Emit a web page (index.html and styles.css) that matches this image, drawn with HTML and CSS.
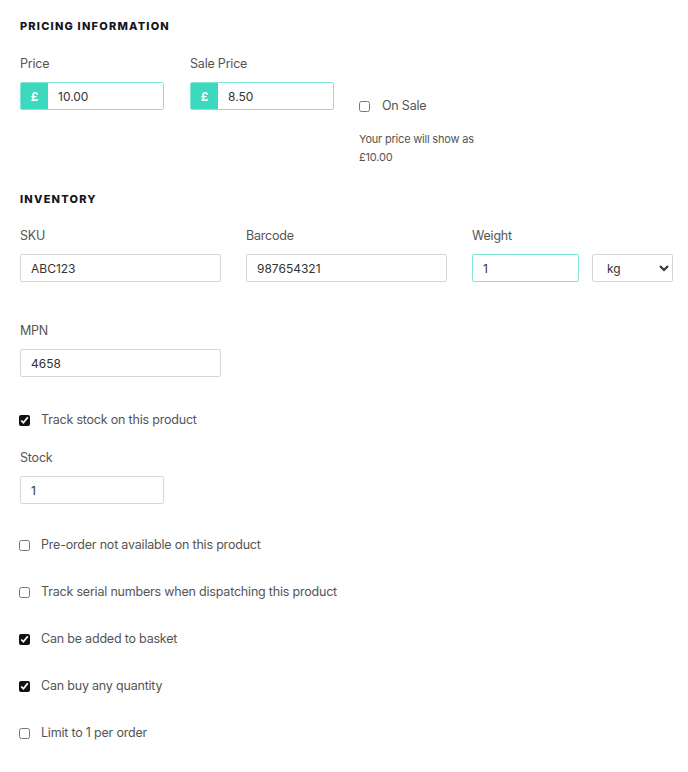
FILE: index.html
```html
<!DOCTYPE html>
<html lang="en">
<head>
    <meta charset="UTF-8">
    <title>Product Pricing &amp; Inventory</title>
    <link rel="stylesheet" href="styles.css">
</head>
<body>
    <div class="panel">
        <h2 class="section-title">Pricing Information</h2>
        <div class="pricing-row">
            <div class="field">
                <label>Price</label>
                <div class="money-input">
                    <span class="currency">£</span>
                    <input type="text" value="10.00">
                </div>
            </div>
            <div class="field">
                <label>Sale Price</label>
                <div class="money-input">
                    <span class="currency">£</span>
                    <input type="text" value="8.50">
                </div>
            </div>
            <div class="sale-box">
                <label class="check"><input type="checkbox"> On Sale</label>
                <p class="hint">Your price will show as<br>£10.00</p>
            </div>
        </div>

        <h2 class="section-title inventory-title">Inventory</h2>
        <div class="inventory-grid">
            <div class="field">
                <label>SKU</label>
                <input type="text" class="text-input" value="ABC123">
            </div>
            <div class="field">
                <label>Barcode</label>
                <input type="text" class="text-input" value="987654321">
            </div>
            <div class="field">
                <label>Weight</label>
                <div class="weight-row">
                    <input type="text" class="text-input active" value="1">
                    <select class="unit-select">
                        <option>kg</option>
                        <option>g</option>
                        <option>lb</option>
                    </select>
                </div>
            </div>
            <div class="field">
                <label>MPN</label>
                <input type="text" class="text-input" value="4658">
            </div>
        </div>

        <label class="check track-stock"><input type="checkbox" checked> Track stock on this product</label>

        <div class="field stock-field">
            <label>Stock</label>
            <input type="text" class="text-input" value="1">
        </div>

        <div class="options">
            <label class="check"><input type="checkbox"> Pre-order not available on this product</label>
            <label class="check"><input type="checkbox"> Track serial numbers when dispatching this product</label>
            <label class="check"><input type="checkbox" checked> Can be added to basket</label>
            <label class="check"><input type="checkbox" checked> Can buy any quantity</label>
            <label class="check"><input type="checkbox"> Limit to 1 per order</label>
        </div>
    </div>
</body>
</html>
```

FILE: styles.css
```css
* {
    margin: 0;
    padding: 0;
    box-sizing: border-box;
    font-family: Inter, "Noto Sans", sans-serif;
}

body {
    background-color: #fff;
    color: #555;
}

.panel {
    padding: 19px 20px 20px 19px;
}

.section-title {
    font-size: 11px;
    font-weight: 800;
    letter-spacing: 1.2px;
    text-transform: uppercase;
    color: #151521;
    line-height: 14px;
    margin-left: 1px;
}

.inventory-title {
    margin-top: 26px;
}

.field {
    margin-left: 1px;
}

.field label {
    display: block;
    font-size: 12.5px;
    color: #555;
    line-height: 16px;
    margin-bottom: 10px;
    letter-spacing: -0.2px;
}

.pricing-row {
    display: flex;
    gap: 25px;
    margin-top: 23px;
}

.pricing-row .field {
    width: 144px;
}

.money-input {
    display: flex;
    height: 28px;
    border: 1px solid #7fe6d3;
    border-radius: 2px;
    overflow: hidden;
}

.currency {
    width: 27px;
    background-color: #3dd9bf;
    color: #fff;
    font-size: 12px;
    font-weight: 700;
    display: flex;
    align-items: center;
    justify-content: center;
}

.money-input input {
    border: none;
    outline: none;
    flex: 1;
    min-width: 0;
    padding-left: 10px;
    font-size: 12px;
    color: #333;
}

.sale-box {
    padding-top: 42px;
}

.check {
    display: flex;
    align-items: center;
    gap: 11px;
    font-size: 12.5px;
    color: #555;
    letter-spacing: -0.2px;
    line-height: 16px;
}

.check input {
    width: 11px;
    height: 11px;
    margin: 0;
    accent-color: #111;
}

.sale-box .check {
    gap: 12px;
}

.hint {
    margin-top: 16px;
    font-size: 11px;
    line-height: 18px;
    color: #555;
    letter-spacing: -0.2px;
}

.inventory-grid {
    display: grid;
    grid-template-columns: 201px 201px 201px;
    column-gap: 25px;
    row-gap: 41px;
    margin-top: 22px;
    margin-left: 1px;
}

.inventory-grid .field {
    margin-left: 0;
}

.text-input {
    width: 100%;
    height: 28px;
    border: 1px solid #d6d6d6;
    border-radius: 2px;
    padding-left: 10px;
    font-size: 12px;
    color: #333;
    outline: none;
}

.text-input.active {
    border-color: #7fe6d3;
}

.weight-row {
    display: flex;
    gap: 13px;
}

.weight-row .text-input {
    width: 107px;
}

.unit-select {
    width: 81px;
    height: 28px;
    border: 1px solid #d6d6d6;
    border-radius: 2px;
    padding-left: 10px;
    font-size: 12px;
    color: #333;
    background-color: #fff;
}

.track-stock {
    margin-top: 35px;
}

.stock-field {
    margin-top: 22px;
    width: 144px;
}

.options {
    display: flex;
    flex-direction: column;
    gap: 31px;
    margin-top: 33px;
}
```
